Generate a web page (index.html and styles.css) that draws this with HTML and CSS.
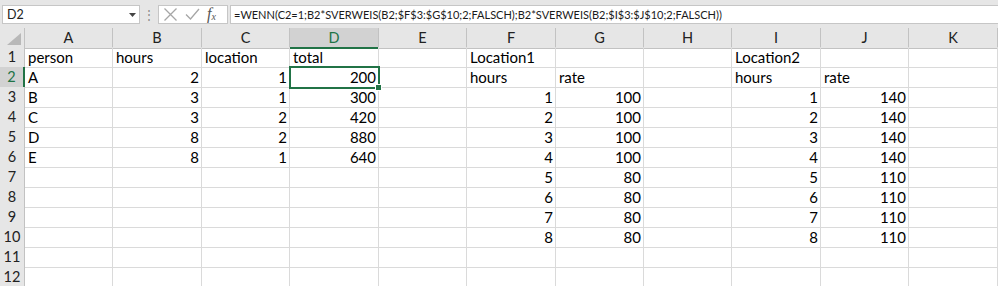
FILE: index.html
```html
<!DOCTYPE html>
<html lang="de">
<head>
    <meta charset="UTF-8">
    <title>Mappe1 - Excel</title>
    <link rel="stylesheet" href="styles.css">
</head>
<body>
    <div class="formula-bar">
        <div class="name-box">
            <span>D2</span>
            <svg class="drop" width="7" height="4" viewBox="0 0 7 4"><path d="M0 0h7L3.5 4z" fill="#444"/></svg>
        </div>
        <div class="grip">⋮</div>
        <div class="fx-box">
            <svg width="15" height="15" viewBox="0 0 15 15"><path d="M1.5 1.5l12 12M13.5 1.5l-12 12" stroke="#a6a6a6" stroke-width="1.3" fill="none"/></svg>
            <svg width="15" height="14" viewBox="0 0 15 14"><path d="M1 7.5l4.5 4.5L14 2" stroke="#a6a6a6" stroke-width="1.3" fill="none"/></svg>
            <span class="fx">f<sub>x</sub></span>
        </div>
        <div class="formula">=WENN(C2=1;B2*SVERWEIS(B2;$F$3:$G$10;2;FALSCH);B2*SVERWEIS(B2;$I$3:$J$10;2;FALSCH))</div>
    </div>

    <div class="sheet">
        <div class="row head">
            <div class="corner"></div>
            <div>A</div><div>B</div><div>C</div><div class="sel">D</div><div>E</div><div>F</div><div>G</div><div>H</div><div>I</div><div>J</div><div>K</div>
        </div>
        <div class="row">
            <div class="rh">1</div>
            <div>person</div><div>hours</div><div>location</div><div>total</div><div></div><div>Location1</div><div></div><div></div><div>Location2</div><div></div><div></div>
        </div>
        <div class="row">
            <div class="rh sel">2</div>
            <div>A</div><div class="num">2</div><div class="num">1</div><div class="num active">200</div><div></div><div>hours</div><div>rate</div><div></div><div>hours</div><div>rate</div><div></div>
        </div>
        <div class="row">
            <div class="rh">3</div>
            <div>B</div><div class="num">3</div><div class="num">1</div><div class="num">300</div><div></div><div class="num">1</div><div class="num">100</div><div></div><div class="num">1</div><div class="num">140</div><div></div>
        </div>
        <div class="row">
            <div class="rh">4</div>
            <div>C</div><div class="num">3</div><div class="num">2</div><div class="num">420</div><div></div><div class="num">2</div><div class="num">100</div><div></div><div class="num">2</div><div class="num">140</div><div></div>
        </div>
        <div class="row">
            <div class="rh">5</div>
            <div>D</div><div class="num">8</div><div class="num">2</div><div class="num">880</div><div></div><div class="num">3</div><div class="num">100</div><div></div><div class="num">3</div><div class="num">140</div><div></div>
        </div>
        <div class="row">
            <div class="rh">6</div>
            <div>E</div><div class="num">8</div><div class="num">1</div><div class="num">640</div><div></div><div class="num">4</div><div class="num">100</div><div></div><div class="num">4</div><div class="num">140</div><div></div>
        </div>
        <div class="row">
            <div class="rh">7</div>
            <div></div><div></div><div></div><div></div><div></div><div class="num">5</div><div class="num">80</div><div></div><div class="num">5</div><div class="num">110</div><div></div>
        </div>
        <div class="row">
            <div class="rh">8</div>
            <div></div><div></div><div></div><div></div><div></div><div class="num">6</div><div class="num">80</div><div></div><div class="num">6</div><div class="num">110</div><div></div>
        </div>
        <div class="row">
            <div class="rh">9</div>
            <div></div><div></div><div></div><div></div><div></div><div class="num">7</div><div class="num">80</div><div></div><div class="num">7</div><div class="num">110</div><div></div>
        </div>
        <div class="row">
            <div class="rh">10</div>
            <div></div><div></div><div></div><div></div><div></div><div class="num">8</div><div class="num">80</div><div></div><div class="num">8</div><div class="num">110</div><div></div>
        </div>
        <div class="row">
            <div class="rh">11</div>
            <div></div><div></div><div></div><div></div><div></div><div></div><div></div><div></div><div></div><div></div><div></div>
        </div>
        <div class="row">
            <div class="rh">12</div>
            <div></div><div></div><div></div><div></div><div></div><div></div><div></div><div></div><div></div><div></div><div></div>
        </div>
    </div>
</body>
</html>
```

FILE: styles.css
```css
body { margin: 0; width: 998px; height: 286px; overflow: hidden; background: #fff; font-family: Lato, "Open Sans", sans-serif; color: #000; }

.formula-bar { display: flex; align-items: center; height: 28px; background: #e6e6e6; padding: 0 0 0 2px; box-sizing: border-box; }
.name-box { display: flex; align-items: center; justify-content: space-between; width: 138px; height: 19px; box-sizing: border-box; background: #fff; border: 1px solid #c6c6c6; padding: 0 3px 0 4px; font-size: 12.5px; color: #222; }
.name-box .drop { margin-top: 1px; }
.grip { width: 18px; text-align: center; color: #8a8a8a; font-size: 12px; }
.fx-box { display: flex; align-items: center; gap: 7px; width: 70px; height: 19px; box-sizing: border-box; background: #fff; border: 1px solid #c6c6c6; padding: 0 0 0 4px; }
.fx { font-family: "Liberation Serif", serif; font-style: italic; font-size: 16px; color: #555; line-height: 1; }
.fx sub { font-size: 10px; vertical-align: -1px; }
.formula { flex: 1; height: 19px; margin-left: 2px; box-sizing: border-box; background: #fff; border: 1px solid #c6c6c6; border-right: 0; padding: 0 0 0 3px; font-size: 11px; line-height: 17px; color: #1a1a1a; white-space: nowrap; overflow: hidden; }

.row { display: grid; grid-template-columns: 25px 88px 89px 88px 89px 88px 89px 88px 88px 89px 88px 89px; height: 20px; }
.row > div { position: relative; box-sizing: border-box; border-right: 1px solid #dadada; border-bottom: 1px solid #dadada; font-size: 15px; line-height: 20px; padding: 0 3px; white-space: nowrap; overflow: visible; }
.row > .num { text-align: right; padding-right: 2px; }

.head { height: 19px; }
.head > div { background: #e6e6e6; border-right-color: #c2c2c2; border-bottom-color: #c2c2c2; text-align: center; color: #222; font-size: 14.5px; line-height: 19px; }
.head > .sel { background: #d2d2d2; color: #217346; border-bottom: 2px solid #217346; }
.corner { overflow: hidden; }
.corner::after { content: ""; position: absolute; right: 3px; bottom: 3px; border-style: solid; border-width: 0 0 12px 14px; border-color: transparent transparent #b8b8b8 transparent; }

.row > .rh { background: #e6e6e6; border-right-color: #c2c2c2; border-bottom-color: #dadada; text-align: center; color: #222; font-size: 14.5px; padding: 0; }
.row > .rh.sel { background: #d2d2d2; color: #217346; border-right: 2px solid #217346; }

.active { outline: 2px solid #217346; outline-offset: -1px; z-index: 1; }
.active::after { content: ""; position: absolute; right: -4px; bottom: -4px; width: 5px; height: 5px; background: #217346; border: 1px solid #fff; }
```
